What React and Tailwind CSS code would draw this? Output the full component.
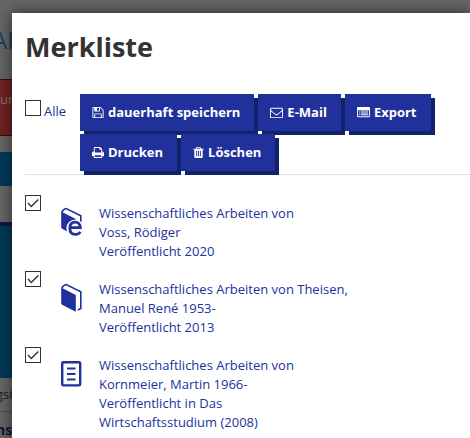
import React from 'react';

const glyphs = {
  save: 'M512 1536h768v-384h-768v384zm896 0h128v-896q0-14-10-38.5t-20-34.5l-281-281q-10-10-34-20t-39-10v416q0 40-28 68t-68 28h-576q-40 0-68-28t-28-68v-416h-128v1280h128v-416q0-40 28-68t68-28h832q40 0 68 28t28 68v416zm-384-928v-320q0-13-9.5-22.5t-22.5-9.5h-192q-13 0-22.5 9.5t-9.5 22.5v320q0 13 9.5 22.5t22.5 9.5h192q13 0 22.5-9.5t9.5-22.5zm640 32v928q0 40-28 68t-68 28h-1344q-40 0-68-28t-28-68v-1344q0-40 28-68t68-28h928q40 0 88 20t76 48l280 280q28 28 48 76t20 88z',
  mail: 'M1664 1504v-768q-32 36-69 66-268 206-426 338-51 43-83 67t-86.5 48.5-102.5 24.5h-2q-48 0-102.5-24.5t-86.5-48.5-83-67q-158-132-426-338-37-30-69-66v768q0 13 9.5 22.5t22.5 9.5h1472q13 0 22.5-9.5t9.5-22.5zm0-1051v-24.5l-.5-13-3-12.5-5.5-9-9-7.5-14-2.5h-1472q-13 0-22.5 9.5t-9.5 22.5q0 168 147 284 193 152 401 317 6 5 35 29.5t46 37.5 44.5 31.5 50.5 27.5 43 9h2q20 0 43-9t50.5-27.5 44.5-31.5 46-37.5 35-29.5q208-165 401-317 54-43 100.5-115.5t46.5-131.5zm128-37v1088q0 66-47 113t-113 47h-1472q-66 0-113-47t-47-113v-1088q0-66 47-113t113-47h1472q66 0 113 47t47 113z',
  export:
    'M160 128h1472q66 0 113 47t47 113v1088q0 66-47 113t-113 47h-1472q-66 0-113-47t-47-113v-1088q0-66 47-113t113-47zM128 576v800q0 32 32 32h1472q32 0 32-32v-800zM256 640h128v128h-128zM512 640h1024v128h-1024zM256 896h128v128h-128zM512 896h1024v128h-1024zM256 1152h128v128h-128zM512 1152h1024v128h-1024z',
  print: 'M448 1536h896v-256h-896v256zm0-640h896v-384h-160q-40 0-68-28t-28-68v-160h-640v640zm1152 64q0-26-19-45t-45-19-45 19-19 45 19 45 45 19 45-19 19-45zm128 0v416q0 13-9.5 22.5t-22.5 9.5h-224v160q0 40-28 68t-68 28h-960q-40 0-68-28t-28-68v-160h-224q-13 0-22.5-9.5t-9.5-22.5v-416q0-79 56.5-135.5t135.5-56.5h64v-544q0-40 28-68t68-28h672q40 0 88 20t76 48l152 152q28 28 48 76t20 88v256h64q79 0 135.5 56.5t56.5 135.5z',
  trash: 'M704 1376v-704q0-14-9-23t-23-9h-64q-14 0-23 9t-9 23v704q0 14 9 23t23 9h64q14 0 23-9t9-23zm256 0v-704q0-14-9-23t-23-9h-64q-14 0-23 9t-9 23v704q0 14 9 23t23 9h64q14 0 23-9t9-23zm256 0v-704q0-14-9-23t-23-9h-64q-14 0-23 9t-9 23v704q0 14 9 23t23 9h64q14 0 23-9t9-23zm-544-992h448l-48-117q-7-9-17-11h-317q-10 2-17 11zm928 32v64q0 14-9 23t-23 9h-96v948q0 83-47 143.5t-113 60.5h-832q-66 0-113-58.5t-47-141.5v-952h-96q-14 0-23-9t-9-23v-64q0-14 9-23t23-9h309l70-167q15-37 54-63t79-26h320q40 0 79 26t54 63l70 167h309q14 0 23 9t9 23z',
};

const actions = [
  { icon: 'save', box: '128 0 1536 1792', size: 'w-3', label: 'dauerhaft speichern' },
  { icon: 'mail', box: '0 0 1792 1792', size: 'w-[13px]', label: 'E-Mail' },
  { icon: 'export', box: '0 0 1792 1792', size: 'w-[13px]', label: 'Export' },
  { icon: 'print', box: '64 0 1664 1792', size: 'w-3', label: 'Drucken' },
  { icon: 'trash', box: '192 0 1408 1792', size: 'w-[11px]', label: 'Löschen' },
];

const entries = [
  { kind: 'ebook', lines: ['Wissenschaftliches Arbeiten von', 'Voss, Rödiger', 'Veröffentlicht 2020'] },
  { kind: 'book', lines: ['Wissenschaftliches Arbeiten von Theisen,', 'Manuel René 1953-', 'Veröffentlicht 2013'] },
  {
    kind: 'article',
    lines: [
      'Wissenschaftliches Arbeiten von',
      'Kornmeier, Martin 1966-',
      'Veröffentlicht in Das',
      'Wirtschaftsstudium (2008)',
    ],
  },
];

function MediaIcon({ kind }) {
  if (kind === 'article') {
    return (
      <svg viewBox="0 0 22 30" className="h-[30px] w-[22px]" fill="none" stroke="currentColor" aria-hidden="true">
        <rect x="2.2" y="4.2" width="18" height="23.2" rx="1.2" strokeWidth="2.4" />
        <path d="M7 10.500h8.500M7 16h8.500M7 21.500h8.500" strokeWidth="2.2" />
      </svg>
    );
  }
  return (
    <svg viewBox="0 0 22 30" className="h-[30px] w-[22px]" aria-hidden="true">
      <path d="M1.200 5.500 15.800 13V29.800L2.500 23Q1.200 22.300 1.200 21Z" fill="currentColor" />
      <path
        d="M2 6Q2.500 3.600 6.200 2.500L20.800 9.800V26.400L17.800 28"
        fill="none"
        stroke="currentColor"
        strokeWidth="1.600"
      />
      {kind === 'ebook' && (
        <g fill="none">
          <circle cx="15.200" cy="22.300" r="8.800" fill="white" />
          <path
            d="M10 21.600H20.300Q19.800 16.200 15.200 16.200Q9.800 16.200 9.800 22.300Q9.800 28.400 15.400 28.400Q18.600 28.400 20.400 26"
            stroke="currentColor"
            strokeWidth="2.800"
          />
        </g>
      )}
    </svg>
  );
}

function Check({ id, checked, labelledBy }) {
  return (
    <span className="grid size-4 shrink-0">
      <input
        id={id}
        type="checkbox"
        defaultChecked={checked}
        aria-labelledby={labelledBy}
        className="peer col-start-1 row-start-1 size-4 appearance-none border border-[#333] bg-white"
      />
      <svg
        viewBox="0 0 16 16"
        className="pointer-events-none invisible col-start-1 row-start-1 size-4 peer-checked:visible"
        fill="none"
        stroke="#333"
        strokeWidth="1.4"
        aria-hidden="true"
      >
        <path d="m3 8 3.300 3.500 7-7" />
      </svg>
    </span>
  );
}

function PageBehind() {
  return (
    <div className="absolute inset-0 overflow-hidden whitespace-nowrap bg-[#666]">
      <div className="flex h-[79px] items-center">
        <span className="-ml-2 text-2xl text-[#163f5e]">AI</span>
      </div>
      <div className="h-[57px] border-y border-[#3d0c0c] bg-[#6d2222] pt-[10px] text-[13px] text-[#8a7777]">un</div>
      <div className="h-4" />
      <div className="h-[34px] bg-[#003b5a]" />
      <div className="h-9" />
      <div className="h-[156px] border-t-4 border-[#10164e] bg-[#003b58]" />
      <div className="flex h-[34px] items-center border-b border-[#40525f]">
        <span className="-ml-1 text-[13px] text-[#1c1c1c]">gsin</span>
      </div>
      <div className="pt-2 text-sm font-bold text-[#0d1540]">
        <span className="-ml-1">ns</span>
      </div>
    </div>
  );
}

export default function App() {
  return (
    <div className="relative min-h-screen overflow-hidden font-['Open_Sans','Noto_Sans',sans-serif] text-[13px] leading-[19px] text-[#21319c]">
      <PageBehind />
      <main className="relative ml-3 mt-[13px] min-h-screen bg-white pl-[13px] shadow-[0_0_14px_rgba(0,0,0,0.6)]">
        <h1 className="pt-4 text-[27px] leading-9 font-bold text-[#333]">Merkliste</h1>

        <div className="mt-[29px] flex items-start border-b border-[#e1e1e1] pb-[3px]">
          <div className="flex w-[55px] shrink-0 gap-[3px] pt-[6px]">
            <Check id="all" />
            <label htmlFor="all" className="pt-[2px]">Alle</label>
          </div>
          <div className="flex flex-wrap gap-x-1 gap-y-[3px]">
            {actions.map((a) => (
              <button
                key={a.label}
                type="button"
                className="flex h-[37px] items-center gap-1 bg-[#21319c] pr-[14px] pl-3 font-bold whitespace-nowrap text-white shadow-[4px_4px_0_#13226c]"
              >
                <svg viewBox={a.box} className={`${a.size} h-[13px]`} fill="currentColor" fillRule={a.icon === 'export' ? 'evenodd' : 'nonzero'} aria-hidden="true">
                  <path d={glyphs[a.icon]} />
                </svg>
                {a.label}
              </button>
            ))}
          </div>
        </div>

        <ul className="flex flex-col gap-[10px] pt-5">
          {entries.map((e) => (
            <li key={e.kind} className="flex items-start">
              <Check id={e.kind} checked labelledBy={`${e.kind}-title`} />
              <span className="w-[58px] shrink-0 pt-[11px] pl-[19px]">
                <MediaIcon kind={e.kind} />
              </span>
              <a id={`${e.kind}-title`} href="#titel" className="pt-[9px]">
                {e.lines.map((line) => (
                  <span key={line} className="block">{line}</span>
                ))}
              </a>
            </li>
          ))}
        </ul>
      </main>
    </div>
  );
}
